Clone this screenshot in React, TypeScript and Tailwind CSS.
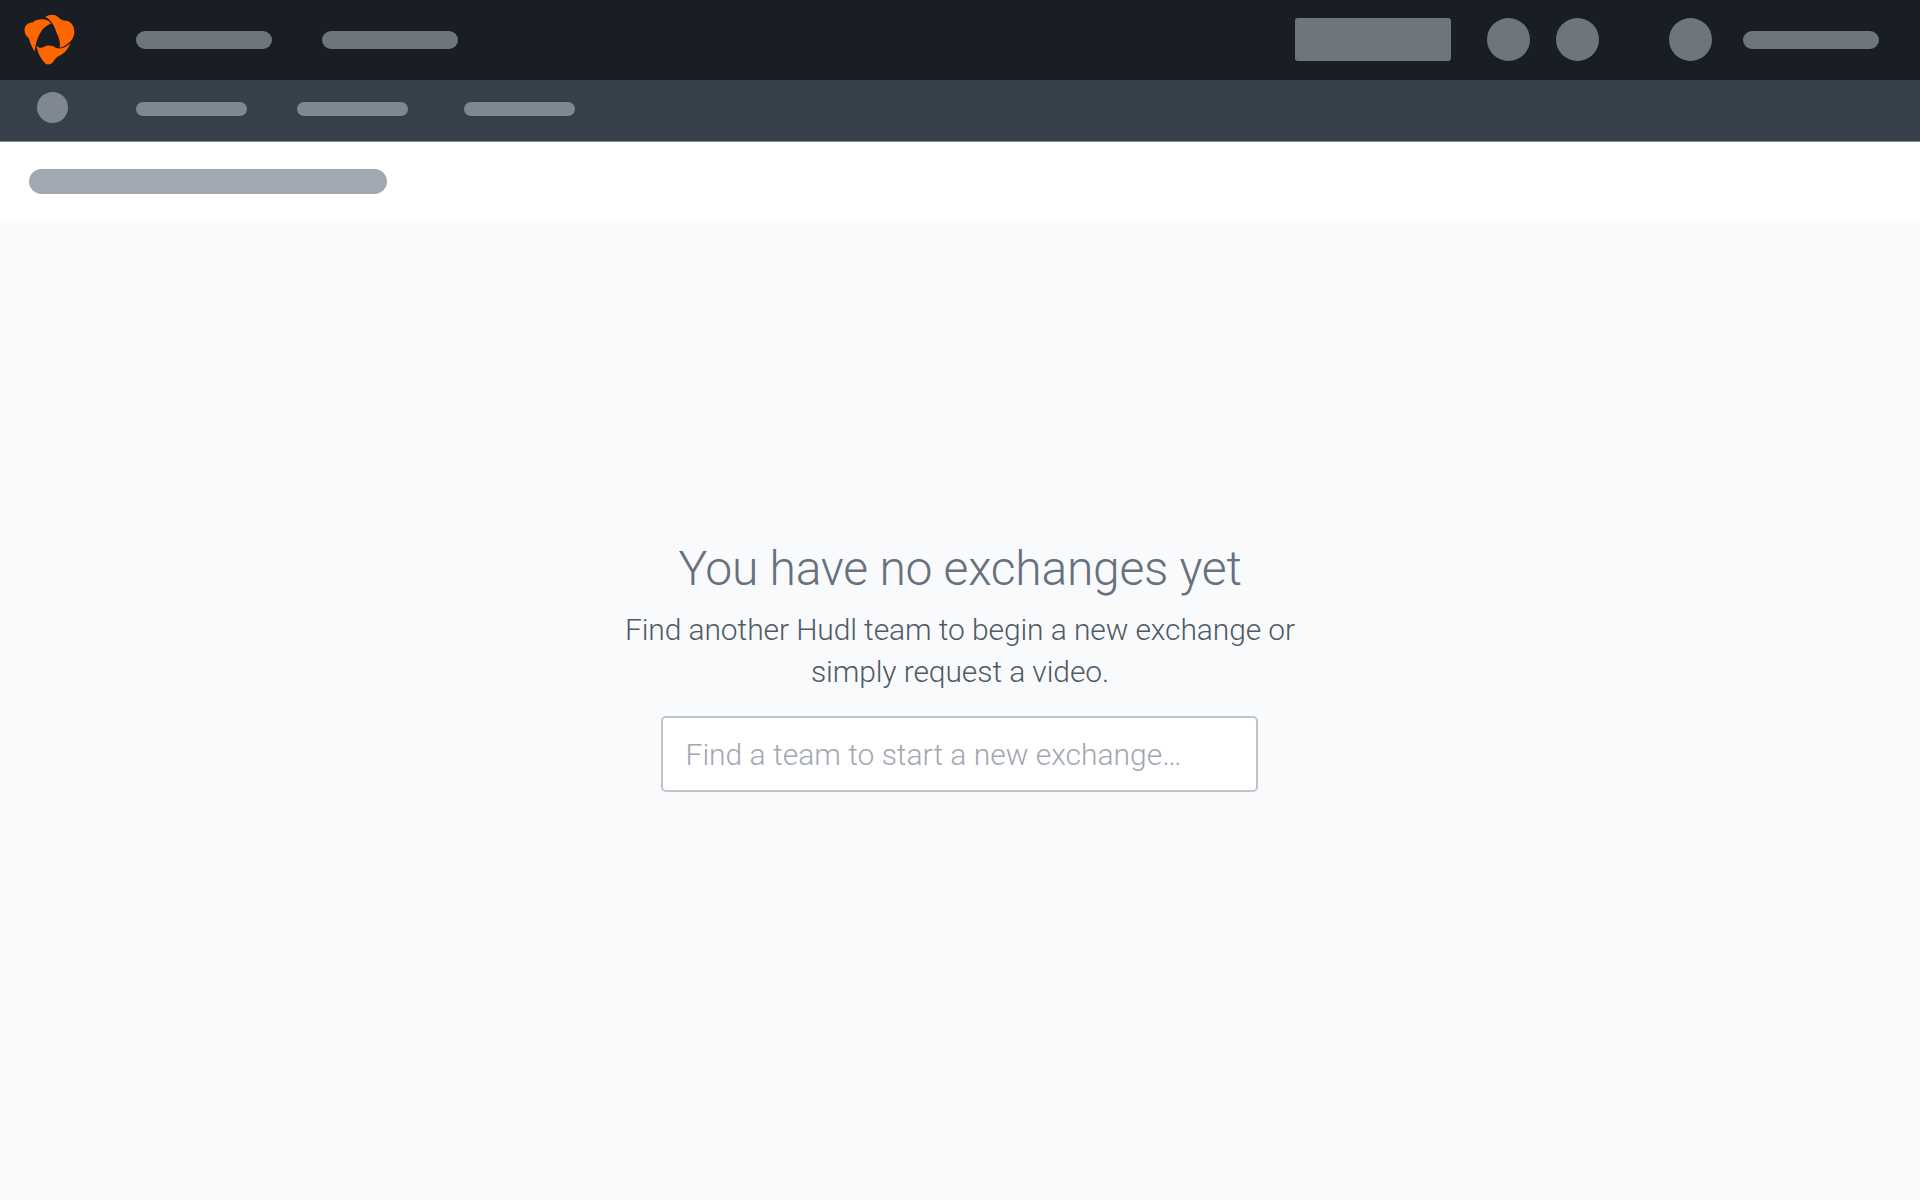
const Pill = ({ className }: { className: string }) => <div className={`rounded-full ${className}`} />

function Logo() {
  return (
    <svg viewBox="0 0 60 60" className="mx-px h-[58px] w-[58px] shrink-0">
      <path fill="#ff6600" d="M4 17 C6 13 9 12 12 12 C15 9 21 8 25 9 C27 9 30 11 31 13 C27 15 23 17 21 21 C17 27 15 34 14 42 C11 37 9 32 8 28 C4 25 3 20 4 17 Z" />
      <path fill="#ff6600" d="M25 6 C30 3 35 3 38 6 C41 9 43 10 46 10 C51 10 55 15 55 20 C56 25 53 31 49 33 C47 35 44 37 40 38 C41 32 39 27 37 23 C35 16 31 9 25 6 Z" />
      <path fill="#ff6600" d="M16 36 C18 38 21 39 24 37 C27 35 32 35 36 38 C40 40 46 38 51 33 C49 39 45 44 40 46 C37 47 35 50 33 53 C30 56 26 56 24 53 C20 49 17 42 16 36 Z" />
    </svg>
  )
}

export default function App() {
  return (
    <div className="flex min-h-[1200px] flex-col bg-[#f9fafb] font-['Roboto',sans-serif]">
      {/* top nav */}
      <nav className="flex h-20 items-center bg-[#191e25] pl-5 pr-[41px]">
        <Logo />
        <div className="ml-14 flex gap-[50px]">
          <Pill className="h-[18px] w-[136px] bg-[#6e767d]" />
          <Pill className="h-[18px] w-[136px] bg-[#6e767d]" />
        </div>
        <div className="ml-auto flex items-center">
          <div className="mb-[1px] h-[43px] w-[156px] rounded-[3px] bg-[#6e767d]" />
          <div className="mb-[1px] ml-9 h-[43px] w-[43px] rounded-full bg-[#6e767d]" />
          <div className="mb-[1px] ml-[26px] h-[43px] w-[43px] rounded-full bg-[#6e767d]" />
          <div className="mb-[1px] ml-[70px] h-[43px] w-[43px] rounded-full bg-[#6e767d]" />
          <Pill className="ml-[31px] h-[18px] w-[136px] bg-[#6e767d]" />
        </div>
      </nav>

      {/* sub nav */}
      <div className="flex h-[62px] items-center border-b border-[#7f8892] bg-[#36404a] pl-[37px]">
        <div className="mb-[6px] h-[31px] w-[31px] rounded-full bg-[#7f8892]" />
        <Pill className="mb-[3px] ml-[68px] h-[14px] w-[111px] bg-[#7f8892]" />
        <Pill className="mb-[3px] ml-[50px] h-[14px] w-[111px] bg-[#7f8892]" />
        <Pill className="mb-[3px] ml-[56px] h-[14px] w-[111px] bg-[#7f8892]" />
      </div>

      {/* page title */}
      <div className="flex h-[81px] items-center bg-white pb-[3px] pl-[29px]">
        <Pill className="h-[25px] w-[358px] bg-[#a0a8b2]" />
      </div>

      {/* empty state */}
      <div className="flex flex-col items-center pt-[316px]">
        <h1 className="text-[48px] leading-[60px] font-light tracking-[-0.25px] text-[#66717d]">You have no exchanges yet</h1>
        <p className="mt-[10px] w-[700px] text-center text-[30px] leading-[42px] font-light tracking-[-0.1px] text-[#4f5a66]">
          Find another Hudl team to begin a new exchange or simply request a video.
        </p>
        <input
          placeholder="Find a team to start a new exchange…"
          className="mt-[23px] -ml-[2px] h-[76px] w-[597px] rounded-[5px] border-2 border-[#c0c5cc] bg-white px-[23px] text-[30px] font-light outline-none placeholder:text-[#a0a8b2]"
        />
      </div>
    </div>
  )
}
